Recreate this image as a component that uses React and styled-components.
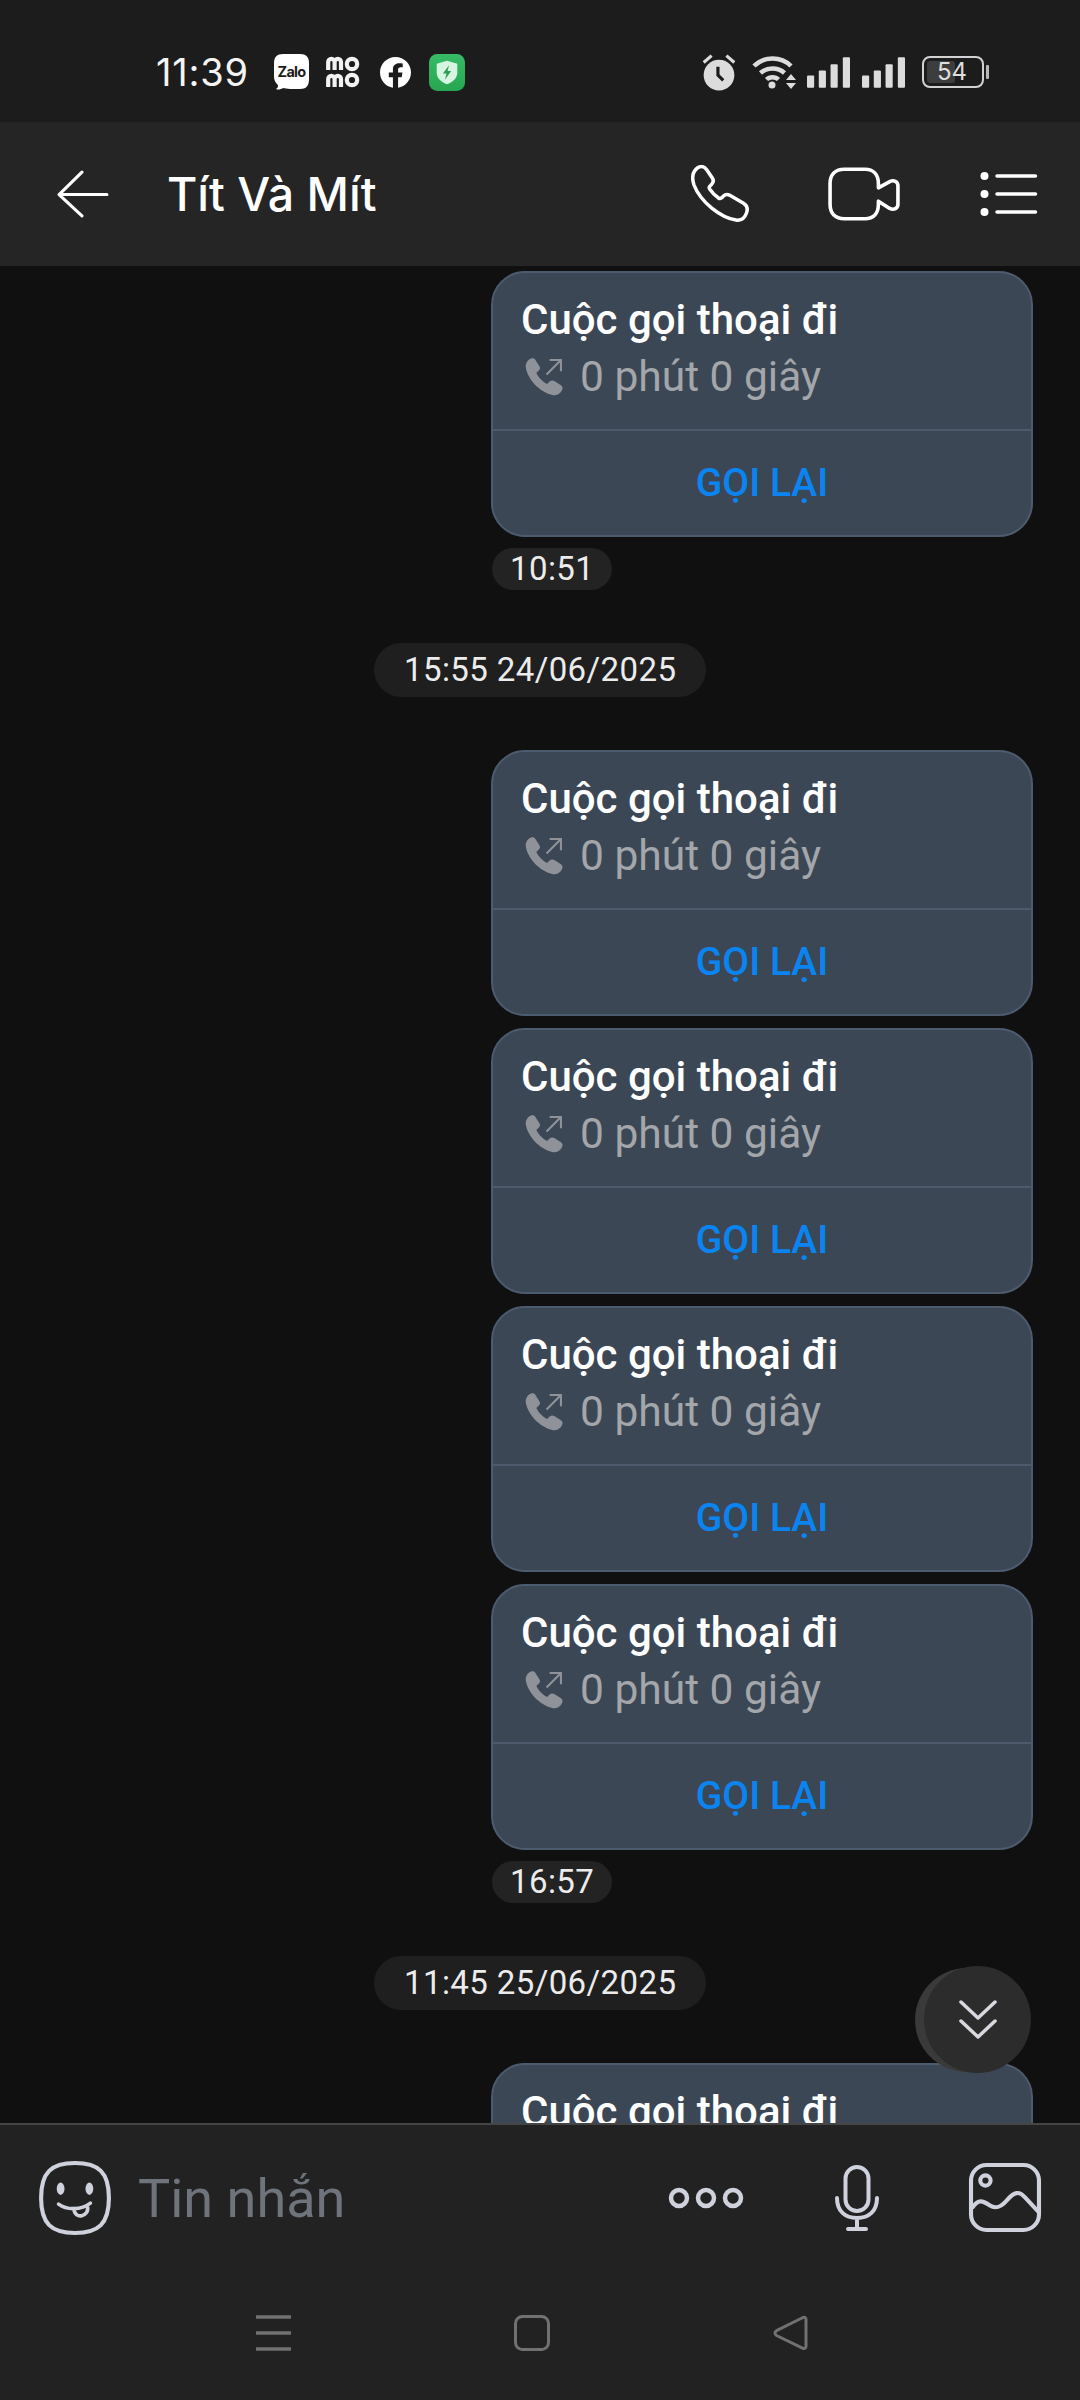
import React from "react";
import styled, { createGlobalStyle } from "styled-components";

const Global = createGlobalStyle`
  html, body { margin: 0; padding: 0; background: #101010; }
  #root { width: 1080px; height: 2400px; }
  * { box-sizing: border-box; }
`;

const Page = styled.div`
  width: 1080px; height: 2400px; display: flex; flex-direction: column;
  background: #101010; overflow: hidden; font-family: Roboto, "Noto Sans", sans-serif;
`;
const StatusBar = styled.div`
  height: 122px; flex: none; background: #1c1c1c; display: flex; align-items: center;
  justify-content: space-between; padding: 22px 91px 0 156px; color: #fff;
`;
const StatusGroup = styled.div`
  display: flex; align-items: center;
`;
const Clock = styled.span`
  font: 400 38px/1 Inter, sans-serif; letter-spacing: 0.8px; margin-right: 25px; color: #f4f4f4;
`;
const Header = styled.header`
  height: 144px; flex: none; background: #252525; display: flex; align-items: center; padding: 0 41px 0 57px;
`;
const Title = styled.h1`
  margin: 0 0 0 58px; padding-top: 1px; flex: 1; font: 500 46.500px/1 Inter, sans-serif; color: #fff;
`;
const HeaderActions = styled.div`
  display: flex; align-items: center; gap: 79px;
`;
const Messages = styled.main`
  position: relative; flex: 1; min-height: 0; overflow: hidden; padding: 5px 47px 0 491px;
  display: flex; flex-direction: column;
`;
const Card = styled.article`
  flex: none; width: 542px; height: 266px; margin-bottom: ${p => p.$last ? 0 : 12}px;
  border: 2px solid #4d5b6f; border-radius: 34px; background: #3c4755; display: flex; flex-direction: column;
`;
const CardBody = styled.div`
  height: 158px; flex: none; padding: 24px 29px 0 28px; border-bottom: 2px solid #4d5a6b;
`;
const CardTitle = styled.div`
  font: 500 42px/46px Roboto, sans-serif; color: #fff;
`;
const CardMeta = styled.div`
  display: flex; align-items: center; gap: 17px; margin-top: 11px; padding-left: 4px;
  font: 400 42.500px/46px Roboto, sans-serif; color: #a3a6aa;
`;
const CallBack = styled.div`
  flex: 1; display: flex; align-items: center; justify-content: center;
  font: 500 39px/1 Roboto, sans-serif; color: #0a84f0;
`;
const TimePill = styled.div`
  align-self: flex-start; flex: none; height: 42px; padding: 0 18px; margin: 11px 0 0 1px; border-radius: 21px;
  background: #232323; color: #ececec; font: 400 33px/42px Roboto, sans-serif; letter-spacing: .4px;
`;
const DatePill = styled.div`
  align-self: flex-start; flex: none; height: 54px; padding: 0 30px; margin: 53px 0 53px -117px; border-radius: 27px;
  background: #1f1f1f; color: #ececec; font: 400 33px/54px Roboto, sans-serif; letter-spacing: .4px;
`;
const ScrollBack = styled.div`
  position: absolute; left: 915px; top: 1702px; width: 104px; height: 104px; border-radius: 50%; background: #3a3a3a;
`;
const ScrollButton = styled.button`
  position: absolute; left: 924px; top: 1700px; width: 107px; height: 107px; border: 0; padding: 0; border-radius: 50%;
  background: #2c2c2c; display: flex; align-items: center; justify-content: center;
`;
const Composer = styled.footer`
  height: 277px; flex: none; background: #222; border-top: 2px solid #454545; display: flex; flex-direction: column;
`;
const InputRow = styled.div`
  height: 151px; flex: none; display: flex; align-items: center; padding: 0 38px 6px 39px;
`;
const Placeholder = styled.span`
  flex: 1; margin-left: 27px; padding-top: 2px; font: 400 54px/1 Roboto, sans-serif; color: #6f747c;
`;
const InputActions = styled.div`
  display: flex; align-items: center;
`;
const NavRow = styled.nav`
  flex: 1; display: flex; align-items: center; padding: 0 0 10px 255px; gap: 223px;
`;

const Svg = styled.svg`
  display: block; flex: none; margin-left: ${p => p.$ml || 0}px;
`;

const ZaloIcon = () => (
  <Svg width="35" height="36" viewBox="0 0 35 36">
    <path d="M9 0H26C32 0 35 3 35 9V25C35 32 32 35 26 35C18 35 13 35 9 34C7 35.500 4 36 2 35C4 34 4.500 32 3.500 30.500C1 28 0 26 0 22V9C0 3 3 0 9 0Z" fill="#fff" />
    <text x="17.500" y="23" textAnchor="middle" fontFamily="Inter, sans-serif" fontSize="14.500" fontWeight="700" letterSpacing="-0.7" fill="#1c1c1c">Zalo</text>
  </Svg>
);
const MomoIcon = () => (
  <Svg width="34" height="32" viewBox="0 0 34 32" $ml={17}>
    <g fill="none" stroke="#f2f2f2" strokeWidth="4.200">
      <path d="M2.200 14V6a3.200 3.200 0 0 1 6.400 0V14M8.600 6a3.200 3.200 0 0 1 6.400 0V14" />
      <circle cx="26" cy="8" r="5.200" />
      <path d="M2.200 31V23a3.200 3.200 0 0 1 6.400 0V31M8.600 23a3.200 3.200 0 0 1 6.400 0V31" />
      <circle cx="26" cy="24" r="5.200" />
    </g>
  </Svg>
);
const FacebookIcon = () => (
  <Svg width="31" height="31" viewBox="0 0 30 30" $ml={20}>
    <path d="M12.500 29.800C5.400 28.600 0 22.400 0 15C0 6.700 6.700 0 15 0S30 6.700 30 15C30 22.400 24.600 28.600 17.500 29.800V19.500H21L21.700 15H17.500V12.500C17.500 11 18.300 10 20 10H22V6.300C20.800 6.100 19.500 6 18.500 6C14.800 6 12.500 8.200 12.500 12V15H8.500V19.500H12.500Z" fill="#fff" />
  </Svg>
);
const GuardIcon = () => (
  <Svg width="36" height="37" viewBox="0 0 35 36" $ml={18}>
    <defs>
      <linearGradient id="grd" x1="0" y1="0" x2="0" y2="1">
        <stop offset="0" stopColor="#37bb66" /><stop offset="1" stopColor="#27a651" />
      </linearGradient>
    </defs>
    <rect width="35" height="36" rx="8" fill="url(#grd)" />
    <path d="M17.500 6.500L27.500 9.500V18C27.500 24 22.500 27.500 17.500 29.500C12.500 27.500 7.500 24 7.500 18V9.500Z" fill="#d8f5e2" />
    <path d="M19.500 11L13.500 19H17L15.500 25L21.500 16.500H18Z" fill="#28a050" />
  </Svg>
);
const AlarmIcon = () => (
  <Svg width="34" height="37" viewBox="0 0 32 35">
    <circle cx="16" cy="20" r="14.500" fill="#dcdcdc" />
    <path d="M15 12V20L20 25" fill="none" stroke="#1c1c1c" strokeWidth="3" />
    <path d="M1.500 8L9 1.500M30.500 8L23 1.500" stroke="#dcdcdc" strokeWidth="3" />
  </Svg>
);
const WifiIcon = () => (
  <Svg width="44" height="36" viewBox="0 0 44 36" $ml={16}>
    <g fill="none" stroke="#dcdcdc" strokeWidth="4.500">
      <path d="M2 12C12 2 29 2 39 12" />
      <path d="M8.500 19C15 13 26 13 32.500 19" />
      <path d="M14.500 25.500C17.500 22.500 23.500 22.500 26.500 25.500" />
    </g>
    <circle cx="20" cy="31" r="3.500" fill="#dcdcdc" />
    <path d="M39 20L44 26H34ZM34 29H44L39 35Z" fill="#dcdcdc" />
  </Svg>
);
const SignalIcon = ({ ml }) => (
  <Svg width="43" height="31" viewBox="0 0 42 30" $ml={ml}>
    <g fill="#dcdcdc">
      <rect x="0" y="18" width="7" height="12" rx="1" />
      <rect x="11.500" y="13" width="7" height="17" rx="1" />
      <rect x="23" y="7" width="7" height="23" rx="1" />
      <rect x="35" y="0" width="7" height="30" rx="1" />
    </g>
  </Svg>
);
const BatteryWrap = styled.div`
  position: relative; flex: none; width: 62px; height: 32px; margin: 0 5px 0 17px; border: 2px solid #d2d2d2;
  border-radius: 8px; display: flex; align-items: center; justify-content: center;
  color: #dedede; font: 400 24px/1 Inter, sans-serif; isolation: isolate;
  &::before { content: ""; position: absolute; left: 3px; top: 3px; bottom: 3px; width: 28px; background: #3d3d3d; border-radius: 3px; z-index: -1; }
  &::after { content: ""; position: absolute; right: -7px; top: 7px; width: 3px; height: 14px; background: #b9b9b9; border-radius: 1px; }
`;
const BatteryText = styled.span`
  transform: translateX(-1px);
`;

const BackIcon = () => (
  <Svg width="52" height="48" viewBox="0 0 50 46">
    <path d="M48 23.500H2M24 2L2 23.500L24 44" fill="none" stroke="#fff" strokeWidth="3" strokeLinecap="round" strokeLinejoin="round" />
  </Svg>
);
const PhoneIcon = () => (
  <Svg width="58" height="58" viewBox="0 0 58 58">
    <path d="M7 2.500C10 .8 13.500 1.500 15.500 4.500L21 12.500C22.800 15 22.500 17.500 20.500 19.500L19 21C18 22 18 23.200 18.800 24.300C21 27.500 24 30.500 27.500 33C28.500 33.700 29.800 33.500 30.800 32.700L32.500 31C34.300 29.300 36.500 29 38.800 30.300L52.500 38.300C56 40.500 57 44 55.500 48C53.800 53 50 55.800 45 55C30 53 9.500 37 3 20C.5 12.500 2 6 7 2.500Z" fill="none" stroke="#fff" strokeWidth="3.500" strokeLinejoin="round" />
  </Svg>
);
const VideoIcon = () => (
  <Svg width="72" height="54" viewBox="0 0 70 52">
    <path d="M16 2H36C44 2 49 7 49 16V20L60 14C64 12 68 14 68 18V36C68 40 64 42 60 40L49 33V36C49 45 44 50 36 50H16C7 50 2 45 2 36V16C2 7 7 2 16 2Z" fill="none" stroke="#fff" strokeWidth="3.500" strokeLinejoin="round" />
  </Svg>
);
const ListIcon = () => (
  <Svg width="60" height="46" viewBox="0 0 58 46">
    <g fill="#fff"><circle cx="4.500" cy="5" r="4" /><circle cx="4.500" cy="23" r="4" /><circle cx="4.500" cy="41" r="4" /></g>
    <path d="M17 5H55.500M17 23H55.500M17 41H55.500" stroke="#fff" strokeWidth="3.500" strokeLinecap="round" />
  </Svg>
);
const OutCallIcon = () => (
  <Svg width="38" height="38" viewBox="0 0 37 37">
    <path d="M9.500 1L14 8C15 9.500 14.800 11 13.500 12.200L11 14.500C13 18.500 17 23 21.500 25.200L24 23C25.300 21.800 27 21.600 28.500 22.500L35 26.500C36.700 27.700 37 29.500 36 31.300C34 35 30.500 36.800 26.500 36C14 33 3 21 .8 9.500C.2 5.500 2.500 1.800 5.500 .7C7 .1 8.500 0 9.500 1Z" fill="#8f9399" />
    <path d="M21 16L34 3M24 2H35V13" fill="none" stroke="#8f9399" strokeWidth="2" />
  </Svg>
);
const ChevronsIcon = () => (
  <Svg width="38" height="40" viewBox="0 0 38 40">
    <path d="M2 2L19 18L36 2M2 21L19 37L36 21" fill="none" stroke="#d7d9df" strokeWidth="3.500" strokeLinecap="round" strokeLinejoin="round" />
  </Svg>
);
const StickerIcon = () => (
  <Svg width="72" height="74" viewBox="0 0 70 72">
    <path d="M35 2C58 2 68 11 68 36S58 70 35 70S2 61 2 36S12 2 35 2Z" fill="none" stroke="#cfd2dc" strokeWidth="4" />
    <ellipse cx="21" cy="27" rx="3.800" ry="6" fill="#cfd2dc" />
    <ellipse cx="49" cy="27" rx="3.800" ry="6" fill="#cfd2dc" />
    <path d="M19 42C27 48 41 48 50 41M34 46C34 58 50 54 47 44" fill="none" stroke="#cfd2dc" strokeWidth="3.500" strokeLinecap="round" />
  </Svg>
);
const DotsIcon = () => (
  <Svg width="76" height="24" viewBox="0 0 76 24">
    <g fill="none" stroke="#cfd2dc" strokeWidth="4.500">
      <circle cx="11" cy="12" r="8" /><circle cx="38" cy="12" r="8" /><circle cx="65" cy="12" r="8" />
    </g>
  </Svg>
);
const MicIcon = () => (
  <Svg width="44" height="66" viewBox="0 0 44 66" $ml={91}>
    <g fill="none" stroke="#cfd2dc" strokeWidth="4" strokeLinecap="round">
      <rect x="10.500" y="2" width="23" height="44" rx="11.500" />
      <path d="M2 33C2 46 10 53 22 53S42 46 42 33M22 53V64M13 64H31" />
    </g>
  </Svg>
);
const GalleryIcon = () => (
  <Svg width="74" height="69" viewBox="0 0 70 67" $ml={89}>
    <g fill="none" stroke="#cfd2dc" strokeWidth="4">
      <rect x="2" y="2" width="66" height="63" rx="15" />
      <circle cx="16" cy="17" r="5" />
      <path d="M3 44C9 34 14 37 20 41C26 45 31 43 37 36C44 28 49 27 54 33L68 48" />
    </g>
  </Svg>
);
const NavMenu = () => (
  <Svg width="36" height="36" viewBox="0 0 36 36">
    <path d="M1 2H36M1 18H36M1 34H36" stroke="#717171" strokeWidth="3.500" />
  </Svg>
);
const NavHome = () => (
  <Svg width="36" height="36" viewBox="0 0 36 36">
    <rect x="1.500" y="1.500" width="33" height="33" rx="7" fill="none" stroke="#717171" strokeWidth="3" />
  </Svg>
);
const NavBack = () => (
  <Svg width="36" height="36" viewBox="0 0 36 36">
    <path d="M30 2.500C32 1.800 33 2.800 33 4.500V31C33 33 31.800 34 30 33.300L3.500 20.500C1.500 19.300 1.500 16.800 3.500 15.700Z" fill="none" stroke="#717171" strokeWidth="3" strokeLinejoin="round" />
  </Svg>
);

const CallCard = ({ last }) => (
  <Card $last={last}>
    <CardBody>
      <CardTitle>Cuộc gọi thoại đi</CardTitle>
      <CardMeta><OutCallIcon />0 phút 0 giây</CardMeta>
    </CardBody>
    <CallBack>GỌI LẠI</CallBack>
  </Card>
);

export default function App() {
  return (
    <Page>
      <Global />
      <StatusBar>
        <StatusGroup>
          <Clock>11:39</Clock>
          <ZaloIcon /><MomoIcon /><FacebookIcon /><GuardIcon />
        </StatusGroup>
        <StatusGroup>
          <AlarmIcon /><WifiIcon /><SignalIcon ml={11} /><SignalIcon ml={12} />
          <BatteryWrap><BatteryText>54</BatteryText></BatteryWrap>
        </StatusGroup>
      </StatusBar>
      <Header>
        <BackIcon />
        <Title>Tít Và Mít</Title>
        <HeaderActions>
          <PhoneIcon /><VideoIcon /><ListIcon />
        </HeaderActions>
      </Header>
      <Messages>
        <CallCard last />
        <TimePill>10:51</TimePill>
        <DatePill>15:55 24/06/2025</DatePill>
        <CallCard /><CallCard /><CallCard /><CallCard last />
        <TimePill>16:57</TimePill>
        <DatePill>11:45 25/06/2025</DatePill>
        <CallCard />
        <ScrollBack />
        <ScrollButton aria-label="Cuộn xuống"><ChevronsIcon /></ScrollButton>
      </Messages>
      <Composer>
        <InputRow>
          <StickerIcon />
          <Placeholder>Tin nhắn</Placeholder>
          <InputActions><DotsIcon /><MicIcon /><GalleryIcon /></InputActions>
        </InputRow>
        <NavRow><NavMenu /><NavHome /><NavBack /></NavRow>
      </Composer>
    </Page>
  );
}
